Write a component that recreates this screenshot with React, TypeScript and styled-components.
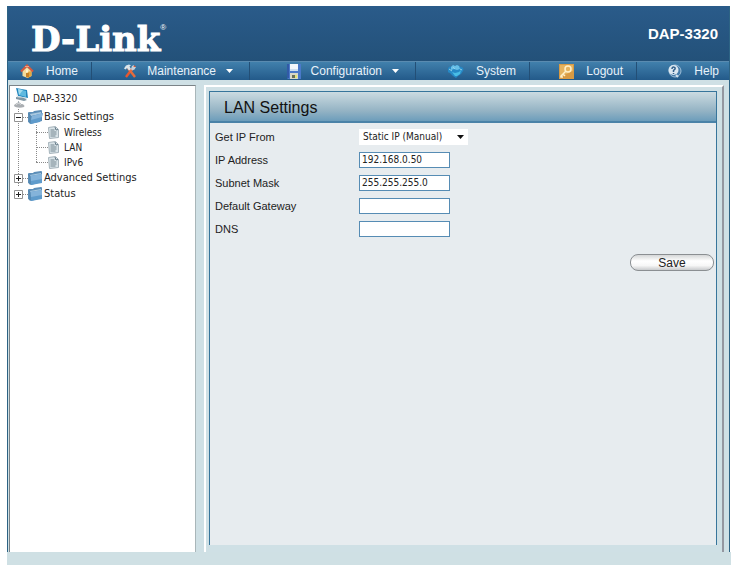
import React from "react";
import styled, { createGlobalStyle } from "styled-components";

const GlobalStyle = createGlobalStyle`
  *, *::before, *::after { box-sizing: border-box; }
  body { margin: 0; background: #fff; font: 12px/16px "Liberation Sans", Arial, sans-serif; color: #222; }
`;

const Page = styled.div`
  display: flex;
  flex-direction: column;
  min-height: 100vh;
  padding: 6px 0 0 7px;
`;

const Shell = styled.div`
  flex: 1;
  display: flex;
  flex-direction: column;
  margin-right: 1px;
  border: 0 solid #2d6384;
  border-width: 0 1px;
  background: #cfe0e5;
`;

const Header = styled.header`
  display: flex;
  justify-content: space-between;
  align-items: center;
  height: 55px;
  padding: 0 11px 0 23px;
  background: linear-gradient(#2a5b8a, #235179);
  color: #fff;
`;

const Logo = styled.div`
  display: flex;
  align-items: flex-start;
  padding-top: 10px;
  font: bold 34px/40px "DejaVu Serif", serif;
  -webkit-text-stroke: 1px #fff;

  sup {
    margin-top: 4px;
    font: 8px/10px "Liberation Sans", Arial, sans-serif;
    -webkit-text-stroke: 0;
  }
`;

const Model = styled.div`
  font-size: 15px;
  font-weight: bold;
`;

const Nav = styled.nav`
  display: grid;
  grid-template-columns: 84fr 158fr 166fr 114fr 107fr 92fr;
  height: 19px;
  border-top: 1px solid #5a8bb0;
  background: linear-gradient(#4180ac, #235a8a);
`;

const NavItem = styled.a<{ $end: number; $gap: number }>`
  display: flex;
  align-items: center;
  justify-content: flex-end;
  gap: ${(p) => p.$gap}px;
  padding-right: ${(p) => p.$end}px;
  border-right: 1px solid #234f76;
  color: #e8f2fa;
  text-decoration: none;
  white-space: nowrap;

  &:last-child { border-right: 0; }
  svg { flex: none; }
`;

const Body = styled.div`
  flex: 1;
  display: flex;
  gap: 8px;
  padding: 5px 5px 0 1px;
`;

const Sidebar = styled.aside`
  flex: 0 0 187px;
  padding: 2px 0 0 4px;
  background: #fff;
  border: 1px solid #7b8387;
  border-right-color: #a9b6b9;
  border-bottom: 0;
  font-family: "DejaVu Sans Condensed", "DejaVu Sans", sans-serif;
`;

const Root = styled.a`
  display: flex;
  align-items: center;
  gap: 4px;
  height: 21px;
  font-size: 10px;
  line-height: 16px;
  color: #222;
  text-decoration: none;
`;

const Tree = styled.ul`
  list-style: none;
  margin: 0;
  padding: 0;
  background: repeating-linear-gradient(#8a8a8a 0 1px, transparent 1px 2px) 4px 0 / 1px 78px no-repeat;
`;

const BranchLine = styled.div`
  display: flex;
  align-items: center;
  height: 16px;
`;

const Toggle = styled.button`
  display: flex;
  width: 9px;
  height: 9px;
  padding: 0;
  border: 0;
  background: #fff;
`;

const Dash = styled.span<{ $w: number }>`
  width: ${(p) => p.$w}px;
  border-top: 1px dotted #8a8a8a;
`;

const FolderLink = styled.a`
  display: flex;
  align-items: center;
  gap: 1px;
  font-size: 11px;
  color: #222;
  text-decoration: none;
`;

const Leaves = styled.ul`
  list-style: none;
  margin: 0 0 0 22px;
  padding: 0;
  background: repeating-linear-gradient(#8a8a8a 0 1px, transparent 1px 2px) 0 0 / 1px 37px no-repeat;
`;

const Leaf = styled.li`
  display: flex;
  align-items: center;
  height: 15px;
`;

const LeafLink = styled.a`
  display: flex;
  align-items: center;
  gap: 5px;
  font-size: 10px;
  line-height: 15px;
  color: #222;
  text-decoration: none;
`;

const Frame = styled.main`
  flex: 1;
  display: flex;
  padding: 4px 5px 7px 3px;
  border: 2px solid #fff;
  border-right: 2px solid #9497a0;
  border-bottom: 0;
`;

const Panel = styled.section`
  flex: 1;
  border: 1px solid #37759b;
  border-bottom: 0;
  background: #e7ecef;
`;

const Title = styled.h1`
  height: 31px;
  margin: 0;
  padding: 0 14px;
  border-bottom: 2px solid #4b83a8;
  background: linear-gradient(#cbdbe1, #94b3c4 65%, #6c9dbb);
  font-size: 16px;
  line-height: 31px;
  font-weight: normal;
  color: #111;
`;

const Form = styled.form`
  padding: 2px 2px 0 5px;
`;

const Field = styled.div`
  display: grid;
  grid-template-columns: 144px 1fr;
  align-items: center;
  height: 23px;

  label { font-size: 11px; }
`;

const TextBox = styled.input`
  width: 91px;
  height: 16px;
  padding: 0 2px;
  border: 1px solid #568cb4;
  border-radius: 0;
  background: #fff;
  font: 10px/14px "DejaVu Sans Condensed", "DejaVu Sans", sans-serif;
  color: #222;
`;

const SelectBox = styled.span`
  display: grid;
  width: 109px;
  align-items: center;

  select, svg { grid-area: 1 / 1; }
  svg { justify-self: end; margin-right: 4px; pointer-events: none; }
`;

const Select = styled.select`
  appearance: none;
  width: 100%;
  height: 16px;
  padding: 0 4px;
  border: 0;
  border-radius: 0;
  background: #fff;
  font: 10px/16px "DejaVu Sans Condensed", "DejaVu Sans", sans-serif;
  color: #222;
`;

const Actions = styled.div`
  display: flex;
  justify-content: flex-end;
  padding-top: 14px;
`;

const SaveButton = styled.button`
  width: 84px;
  height: 17px;
  padding: 0;
  border: 1px solid #8b8f92;
  border-radius: 8px;
  background: linear-gradient(#d5d7d8, #fff 40%, #f7f7f7 70%, #c9cbcd);
  font: 12px/14px "Liberation Sans", Arial, sans-serif;
  color: #222;
`;

const Footer = styled.footer`
  height: 13px;
  background: #cfe0e4;
`;

const HomeIcon = () => (
  <svg width="14" height="14" viewBox="0 0 14 14">
    <path d="M2.5 7v5l5 2 4-2V7L7 3z" fill="#f4dc9c" />
    <path d="M7.5 8v6l4-2V7z" fill="#e5a63e" />
    <path d="M1 7.5 7 1.5l6 6" fill="none" stroke="#d9593c" strokeWidth="2" />
    <path d="M5 2.5h4" stroke="#f3a082" />
    <path d="M6 9h3v4.5L6 13z" fill="#c68126" />
    <path d="M7 5.5v3" stroke="#fff5d0" strokeWidth="2" />
  </svg>
);

const ToolsIcon = () => (
  <svg width="14" height="14" viewBox="0 0 14 14">
    <path d="m12 2-4.500 5L3 13" fill="none" stroke="#e8562d" strokeWidth="2.400" />
    <path d="m5 4 7 9" fill="none" stroke="#e76a3b" strokeWidth="2.400" />
    <path d="m1 4.500 2-3 3-1 2 1-1.500 1L8 5 6 6.500 4 4 2.500 5.500z" fill="#dce5ea" />
    <path d="m8 5 1-3 2-1-.5 2L13 3l-1.500 2.500L9 6.500z" fill="#c4d1da" />
  </svg>
);

const DiskIcon = () => (
  <svg width="14" height="15" viewBox="0 0 14 15">
    <path d="M0 0h14v15H1l-1-1z" fill="#4a79c9" />
    <path d="M0 0h2v14H0z" fill="#315aa7" />
    <path d="M3 0h8v7H3z" fill="#f3f8fc" />
    <path d="M3 5h8v2H3z" fill="#cddff0" />
    <path d="M3 9h8v6H3z" fill="#d7d7c7" />
    <path d="M5 11h3v3H5z" fill="#68705b" />
    <path d="M8 11h2v3H8z" fill="#dfe475" />
  </svg>
);

const SystemIcon = () => (
  <svg width="16" height="14" viewBox="0 0 16 14">
    <path d="M0 5c0-2 2-3 3-2l2-2 2 1 2-1 2 1 2 1c2 0 3 2 2 4l-2 3-3 2-2 2-3-2-3-3-3-1z" fill="#2689c6" />
    <path d="m3 3 2-2 2 1 2-1 2 1 1 3-3 1-3-1-3 1z" fill="#68bfe7" />
    <path d="m4 8 3 1 4-1 2-2-1 4-3 2H7z" fill="#49bde5" />
    <path d="m1 5 3 2m1-4 2 2m5 0 2 1" stroke="#8fd0ec" />
  </svg>
);

const KeyIcon = () => (
  <svg width="15" height="15" viewBox="0 0 15 15">
    <rect width="15" height="15" fill="#d89a43" />
    <path d="M1 1h13v6L1 13z" fill="#e5b35f" />
    <circle cx="9" cy="5" r="3" fill="none" stroke="#fff0c8" strokeWidth="1.500" />
    <path d="m7 7-5 5v1h2m0-3 2 2" fill="none" stroke="#fff0c8" strokeWidth="1.500" />
  </svg>
);

const HelpIcon = () => (
  <svg width="15" height="14" viewBox="0 0 15 14">
    <circle cx="8" cy="7" r="6" fill="#457baa" stroke="#9fbfd8" />
    <circle cx="6.500" cy="6" r="5" fill="#dbe7f0" />
    <path d="M5 5c0-3 4-2 3 0L6.500 6.500V8m0 1v1" fill="none" stroke="#315f8a" strokeWidth="1.500" />
    <path d="m9 11 2 2" stroke="#d6e4ee" strokeWidth="2" />
  </svg>
);

const Caret = () => (
  <svg width="7" height="5" viewBox="0 0 7 5"><path d="M0 0h7L3.500 4z" fill="#fff" /></svg>
);

const ComputerIcon = () => (
  <svg width="15" height="22" viewBox="0 0 15 22">
    <path d="m2 0 11 2 1 8-10-2z" fill="#2185bd" />
    <path d="m4 1 8 2v6L5 7z" fill="#5fb9df" />
    <path d="m4 1 5 1-4 5z" fill="#a4dced" />
    <path d="m1 1 2 7 10 2-1 1-9-2z" fill="#cad9df" />
    <path d="m2 9 8 1 3 2-3 1-8-2z" fill="#7f96a3" />
    <path d="M4 13h1v3H4z" fill="#abb5bb" />
    <path d="M0 18c0-2 2-2 3-3 2-1 4 0 4 1 3 0 4 2 3 3-3 1-8 1-10-1z" fill="#aaaeb2" />
    <path d="M2 17c1-2 4-2 5 0" fill="none" stroke="#dadddf" />
  </svg>
);

const FolderIcon = ({ open = false }: { open?: boolean }) => (
  <svg width="15" height="14" viewBox="0 0 15 14">
    <path d="M0 3q0-1 1-1h4l1-1 7-1q1 0 1 1v10L3 14l-3-2z" fill="#5d8fb9" />
    <path d="M2 4 13 2v2L3 6z" fill="#a9c8df" />
    <path d={open ? "m4 6 11-3-3 9-10 2z" : "m2 5 12-2v9L3 14z"} fill="#5f9bcb" />
    <path d={open ? "m4 6 11-3-1 4-11 3z" : "m2 5 12-2v5L3 10z"} fill="#84b3da" />
    <path d="m.5 3.500 1.500 2v8" fill="none" stroke="#4f82ab" />
  </svg>
);

const PageIcon = () => (
  <svg width="11" height="13" viewBox="0 0 11 13">
    <path d="M.5 1.500 7.500.5l3 3v8l-9 1z" fill="#d9e3e8" stroke="#a4b2ba" />
    <path d="M2.500 4h4m-4 2h6m-6 2h6m-6 2h5" stroke="#72858f" />
    <path d="m7 1 1 3 2-.5" fill="none" stroke="#657a87" />
  </svg>
);

const ToggleGlyph = ({ open }: { open: boolean }) => (
  <svg width="9" height="9" viewBox="0 0 9 9">
    <path d="M.5.5h8v8h-8z" fill="#fff" stroke="#929292" />
    <path d={open ? "M2 4.500h5" : "M2 4.500h5M4.500 2v5"} stroke="#222" />
  </svg>
);

const NAV = [
  { label: "Home", icon: <HomeIcon />, end: 13 },
  { label: "Maintenance", icon: <ToolsIcon />, end: 16, menu: true },
  { label: "Configuration", icon: <DiskIcon />, end: 16, menu: true },
  { label: "System", icon: <SystemIcon />, end: 13 },
  { label: "Logout", icon: <KeyIcon />, end: 13 },
  { label: "Help", icon: <HelpIcon />, end: 10 },
];

const FIELDS = [
  { id: "ip", label: "IP Address", value: "192.168.0.50" },
  { id: "mask", label: "Subnet Mask", value: "255.255.255.0" },
  { id: "gateway", label: "Default Gateway", value: "" },
  { id: "dns", label: "DNS", value: "" },
];

const Branch = ({ label, open = false }: { label: string; open?: boolean }) => (
  <BranchLine>
    <Toggle type="button" aria-label={`Toggle ${label}`} aria-expanded={open}>
      <ToggleGlyph open={open} />
    </Toggle>
    <Dash $w={5} />
    <FolderLink href="#"><FolderIcon open={open} />{label}</FolderLink>
  </BranchLine>
);

export default function App() {
  return (
    <>
      <GlobalStyle />
      <Page>
        <Shell>
          <Header>
            <Logo>D-Link<sup>®</sup></Logo>
            <Model>DAP-3320</Model>
          </Header>
          <Nav>
            {NAV.map((n) => (
              <NavItem key={n.label} href="#" $end={n.end} $gap={n.menu ? 10 : 12}>
                {n.icon}
                <span>{n.label}</span>
                {n.menu && <Caret />}
              </NavItem>
            ))}
          </Nav>
          <Body>
            <Sidebar>
              <Root href="#"><ComputerIcon />DAP-3320</Root>
              <Tree>
                <li>
                  <Branch label="Basic Settings" open />
                  <Leaves>
                    {["Wireless", "LAN", "IPv6"].map((l) => (
                      <Leaf key={l}>
                        <Dash $w={12} />
                        <LeafLink href="#"><PageIcon />{l}</LeafLink>
                      </Leaf>
                    ))}
                  </Leaves>
                </li>
                <li><Branch label="Advanced Settings" /></li>
                <li><Branch label="Status" /></li>
              </Tree>
            </Sidebar>
            <Frame>
              <Panel>
                <Title>LAN Settings</Title>
                <Form onSubmit={(e) => e.preventDefault()}>
                  <Field>
                    <label htmlFor="source">Get IP From</label>
                    <SelectBox>
                      <Select id="source" defaultValue="static">
                        <option value="static">Static IP (Manual)</option>
                        <option value="dhcp">Dynamic IP (DHCP)</option>
                      </Select>
                      <svg width="7" height="4" viewBox="0 0 7 4"><path d="M0 0h7L3.500 4z" fill="#111" /></svg>
                    </SelectBox>
                  </Field>
                  {FIELDS.map((f) => (
                    <Field key={f.id}>
                      <label htmlFor={f.id}>{f.label}</label>
                      <TextBox id={f.id} type="text" defaultValue={f.value} />
                    </Field>
                  ))}
                  <Actions><SaveButton type="submit">Save</SaveButton></Actions>
                </Form>
              </Panel>
            </Frame>
          </Body>
        </Shell>
        <Footer />
      </Page>
    </>
  );
}
